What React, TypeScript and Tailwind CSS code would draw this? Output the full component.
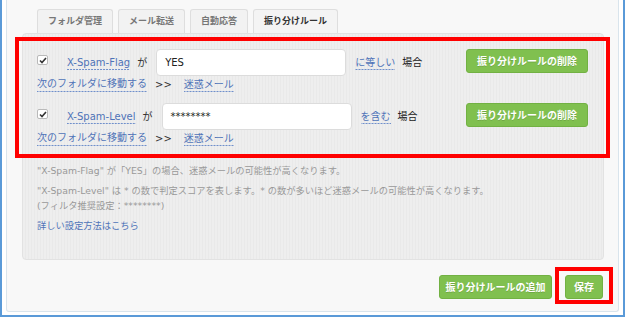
import React from 'react';

const FONT = "font-['DejaVu_Sans','Noto_Sans_CJK_JP',sans-serif]";

function DashedLink({ children }: { children: React.ReactNode }) {
  return (
    <span className="text-[#4f73b8] pb-[2px] bg-[linear-gradient(to_right,#6f8fcb_2px,transparent_2px)] bg-[length:3px_1px] bg-repeat-x bg-bottom leading-[13px]">
      {children}
    </span>
  );
}

function CheckBox() {
  return (
    <span className="self-start mt-[6px] w-[11px] h-[10px] border border-[#b9b9b9] bg-white rounded-[2px] flex items-center justify-center shrink-0">
      <svg width="8" height="7" viewBox="0 0 8 7">
        <path d="M1 3.5 L3 5.5 L7 1" fill="none" stroke="#333" strokeWidth="1.6" />
      </svg>
    </span>
  );
}

function GreenButton({ label, w }: { label: string; w: string }) {
  return (
    <button
      className={`${w} h-[24px] rounded-[3px] bg-[#80c04f] border border-[#72b143] text-white text-[10px] font-bold flex items-center justify-center [text-shadow:0_1px_0_rgba(0,0,0,0.15)]`}
    >
      {label}
    </button>
  );
}

function RuleRow({ field, value, op }: { field: string; value: string; op: string }) {
  return (
    <div className="flex items-start justify-between pr-[18px]">
      <div>
        <div className="flex items-center h-[27px]">
          <CheckBox />
          <span className="ml-[19px]"><DashedLink>{field}</DashedLink></span>
          <span className="ml-[7px] text-[#333]">が</span>
          <div className="ml-[9px] w-[190px] h-[27px] border border-[#dcdcdc] rounded-[4px] bg-white px-[8px] flex items-center text-[#222]">
            {value}
          </div>
          <span className="ml-[9px]"><DashedLink>{op}</DashedLink></span>
          <span className="ml-[7px] text-[#222]">場合</span>
        </div>
        <div className="flex items-center h-[14px] mt-[1px]">
          <DashedLink>次のフォルダに移動する</DashedLink>
          <span className="ml-[8px] text-[#333]">&gt;&gt;</span>
          <span className="ml-[12px]"><DashedLink>迷惑メール</DashedLink></span>
        </div>
      </div>
      <GreenButton label="振り分けルールの削除" w="w-[122px]" />
    </div>
  );
}

export default function App() {
  const tabs = ['フォルダ管理', 'メール転送', '自動応答', '振り分けルール'];
  return (
    <div className={`w-[625px] h-[317px] bg-white border-x-2 border-b-2 border-[#5a9ad8] overflow-hidden text-[10px] ${FONT}`}>
      <div className="mx-[4px] h-[312px] bg-[#f8f8f8] border-x border-b border-[#d9e4ec] rounded-b-[3px] flex flex-col">
        {/* Tabs */}
        <div className="flex gap-[5px] pl-[30px] pt-[9px]">
          {tabs.map((t, i) => (
            <div
              key={t}
              className={`h-[24px] px-[10px] border border-b-0 border-[#dedede] rounded-t-[3px] flex items-center text-[9px] font-bold ${
                i === 3 ? 'bg-[#f4f4f4] text-[#333]' : 'bg-[#f2f2f2] text-[#777]'
              }`}
            >
              {t}
            </div>
          ))}
        </div>

        {/* Panel */}
        <div className="ml-[15px] mr-[14px] h-[227px] border border-[#e2e2e2] rounded-[4px] bg-[repeating-linear-gradient(90deg,#eeeeee_0px,#eeeeee_2px,#e9e9e9_2px,#e9e9e9_3px)] pt-[3px]">
          <div className="ml-[-8px] w-[595px] h-[121px] border-4 border-[#ff0000] pt-[8px] pl-[18px]">
            <RuleRow field="X-Spam-Flag" value="YES" op="に等しい" />
            <div className="h-[12px]" />
            <RuleRow field="X-Spam-Level" value="********" op="を含む" />
          </div>

          <div className="pl-[14px] text-[9.25px] leading-[15px] text-[#999]">
            <p className="mt-[5px]">"X-Spam-Flag" が「YES」の場合、迷惑メールの可能性が高くなります。</p>
            <p className="mt-[5px]">"X-Spam-Level" は * の数で判定スコアを表します。* の数が多いほど迷惑メールの可能性が高くなります。</p>
            <p>(フィルタ推奨設定：********)</p>
            <p className="mt-[5px] text-[#4f73b8]">詳しい設定方法はこちら</p>
          </div>
        </div>

        {/* Footer buttons */}
        <div className="flex justify-end items-start mt-[7px] mr-[5px] gap-[3px]">
          <div className="mt-[8px]">
            <GreenButton label="振り分けルールの追加" w="w-[113px]" />
          </div>
          <div className="border-4 border-[#ff0000] pl-[6px] pr-[6px] pt-[4px] pb-[1px]">
            <GreenButton label="保存" w="w-[38px]" />
          </div>
        </div>
      </div>
    </div>
  );
}
